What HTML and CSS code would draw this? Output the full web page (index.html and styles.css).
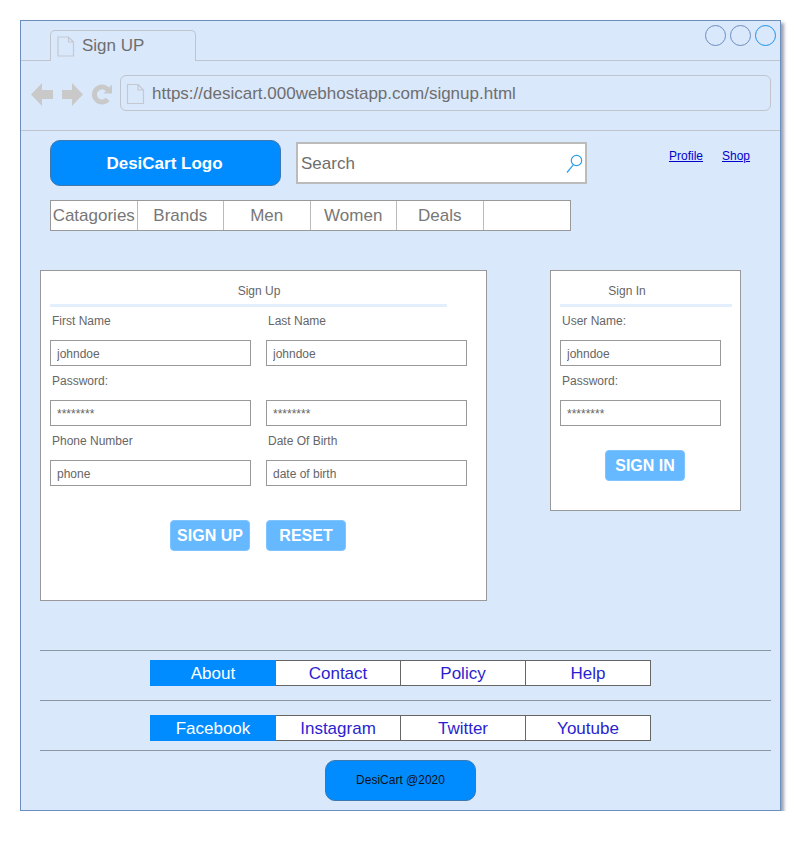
FILE: index.html
```html
<!DOCTYPE html>
<html lang="en">
<head>
  <meta charset="UTF-8" />
  <meta name="viewport" content="width=device-width, initial-scale=1.0"/>
  <title>Sign UP - DesiCart</title>
  <link rel="stylesheet" href="styles.css">
</head>
<body>
  <div class="window">
    <!-- browser chrome -->
    <div class="tab-strip">
      <div class="tab">
        <svg class="page-icon" width="18" height="21" viewBox="0 0 18 21">
          <path d="M1 1H11.500L16.500 6V20H1Z M11.500 1V6H16.500" fill="none" stroke="#c4c9d0" stroke-width="1.200"/>
        </svg>
        <span>Sign UP</span>
      </div>
      <div class="window-buttons">
        <span class="circle"></span>
        <span class="circle"></span>
        <span class="circle circle-active"></span>
      </div>
    </div>

    <div class="address-row">
      <svg class="toolbar-icons" width="84" height="24" viewBox="0 0 84 24">
        <path d="M0 11.500L11 0V7H22V16H11V23Z" fill="#c9c9c9"/>
        <path d="M52 11.500L41 0V7H31V16H41V23Z" fill="#c9c9c9"/>
        <path d="M77.500 7.800A7.500 7.500 0 1 0 76.700 16.300" fill="none" stroke="#c9c9c9" stroke-width="5"/>
        <path d="M72.500 10.500L81 1.500V10.500Z" fill="#c9c9c9"/>
      </svg>
      <div class="url-bar">
        <svg class="page-icon" width="19" height="22" viewBox="0 0 19 22">
          <path d="M1.500 1.500H12L17.500 7V20.500H1.500Z M12 1.500V7H17.500" fill="none" stroke="#c4c9d0" stroke-width="1.200"/>
        </svg>
        <span>https://desicart.000webhostapp.com/signup.html</span>
      </div>
    </div>

    <!-- site header -->
    <header class="site-header">
      <div class="logo">DesiCart Logo</div>
      <div class="search">
        <input class="search-input" type="text" placeholder="Search">
        <svg class="search-icon" width="17" height="19" viewBox="0 0 17 19">
          <circle cx="10.500" cy="6.500" r="5.200" fill="none" stroke="#2f9fe8" stroke-width="1.200"/>
          <path d="M7.300 10.800L1 18.500" fill="none" stroke="#2f9fe8" stroke-width="1.200"/>
        </svg>
      </div>
      <nav class="top-links">
        <a href="#">Profile</a>
        <a href="#">Shop</a>
      </nav>
    </header>

    <nav class="main-nav">
      <span>Catagories</span>
      <span>Brands</span>
      <span>Men</span>
      <span>Women</span>
      <span>Deals</span>
      <span></span>
    </nav>

    <main class="panels">
      <form class="panel panel-signup">
        <h2 class="panel-title">Sign Up</h2>
        <div class="field-grid">
          <div class="field">
            <label for="first-name">First Name</label>
            <input type="text" id="first-name" value="johndoe">
          </div>
          <div class="field">
            <label for="last-name">Last Name</label>
            <input type="text" id="last-name" value="johndoe">
          </div>
          <div class="field">
            <label for="password">Password:</label>
            <input type="text" id="password" value="********">
          </div>
          <div class="field">
            <label for="password-again">&nbsp;</label>
            <input type="text" id="password-again" value="********">
          </div>
          <div class="field">
            <label for="phone">Phone Number</label>
            <input type="text" id="phone" value="phone">
          </div>
          <div class="field">
            <label for="dob">Date Of Birth</label>
            <input type="text" id="dob" value="date of birth">
          </div>
        </div>
        <div class="button-row">
          <button type="submit">SIGN UP</button>
          <button type="reset">RESET</button>
        </div>
      </form>

      <form class="panel panel-signin">
        <h2 class="panel-title">Sign In</h2>
        <div class="field">
          <label for="user-name">User Name:</label>
          <input type="text" id="user-name" value="johndoe">
        </div>
        <div class="field">
          <label for="signin-password">Password:</label>
          <input type="text" id="signin-password" value="********">
        </div>
        <div class="button-row">
          <button type="submit">SIGN IN</button>
        </div>
      </form>
    </main>

    <footer class="site-footer">
      <hr>
      <nav class="footer-nav footer-nav-first">
        <a class="active" href="#">About</a>
        <a href="#">Contact</a>
        <a href="#">Policy</a>
        <a href="#">Help</a>
      </nav>
      <hr>
      <nav class="footer-nav footer-nav-social">
        <a class="active" href="#">Facebook</a>
        <a href="#">Instagram</a>
        <a href="#">Twitter</a>
        <a href="#">Youtube</a>
      </nav>
      <hr>
      <div class="copyright">DesiCart @2020</div>
    </footer>
  </div>
</body>
</html>
```

FILE: styles.css
```css
body {
  font-family: "Liberation Sans", Arial, sans-serif;
  margin: 0;
  padding: 20px 0 0 20px;
  background-color: #fff;
}
* {
  box-sizing: border-box;
}
.window {
  width: 761px;
  height: 791px;
  background-color: #dae8fc;
  border: 1px solid #6c8ebf;
  box-shadow: 3px 3px 3px rgba(60, 70, 100, 0.5);
}

/* browser chrome */
.tab-strip {
  display: flex;
  align-items: flex-end;
  height: 40px;
  padding: 0 4px 0 29px;
  border-bottom: 1px solid #c0c4cc;
}
.tab {
  display: flex;
  align-items: center;
  gap: 7px;
  width: 146px;
  height: 31px;
  margin-bottom: -1px;
  padding: 0 0 0 6px;
  background-color: #dae8fc;
  border: 1px solid #c0c4cc;
  border-bottom: none;
  border-radius: 5px 5px 0 0;
  color: #6e6e6e;
  font-size: 17px;
}
.window-buttons {
  display: flex;
  gap: 4px;
  margin-left: auto;
  align-self: flex-start;
  margin-top: 4px;
}
.circle {
  width: 21px;
  height: 21px;
  border: 1px solid #6c8ebf;
  border-radius: 50%;
}
.circle-active {
  border-color: #1e90e8;
}
.address-row {
  display: flex;
  align-items: flex-start;
  height: 70px;
  padding: 14px 9px 0 10px;
  border-bottom: 1px solid #c0c4cc;
}
.toolbar-icons {
  flex: none;
  margin: 8px 5px 0 0;
}
.url-bar {
  display: flex;
  align-items: center;
  gap: 7px;
  flex: 1;
  height: 36px;
  padding: 2px 0 0 5px;
  border: 1px solid #c0c4cc;
  border-radius: 6px;
  color: #6e6e6e;
  font-size: 17px;
}
.page-icon {
  flex: none;
}

/* site header */
.site-header {
  display: flex;
  align-items: flex-start;
  padding: 9px 0 0 29px;
}
.logo {
  width: 231px;
  height: 46px;
  padding-right: 2px;
  line-height: 45px;
  text-align: center;
  background-color: #008cff;
  border: 1px solid #3d78b0;
  border-radius: 10px;
  color: #fff;
  font-size: 17px;
  font-weight: bold;
}
.search {
  display: flex;
  align-items: center;
  width: 291px;
  height: 42px;
  margin: 2px 0 0 15px;
  padding: 2px 2px 0 3px;
  background-color: #fff;
  border: 2px solid #bbb;
}
.search-input {
  flex: 1;
  min-width: 0;
  padding: 0;
  border: none;
  outline: none;
  font-family: inherit;
  font-size: 17px;
}
.search-input::placeholder {
  color: #6e6e6e;
  opacity: 1;
}
.search-icon {
  margin-top: -2px;
}
.top-links {
  display: flex;
  gap: 19px;
  margin: 9px 0 0 82px;
  font-size: 12px;
}
.top-links a {
  color: #0000cc;
}
.main-nav {
  display: grid;
  grid-template-columns: repeat(6, 1fr);
  width: 521px;
  height: 31px;
  margin: 14px 0 0 29px;
  background-color: #fff;
  border: 1px solid #999;
}
.main-nav span {
  line-height: 29px;
  text-align: center;
  color: #777;
  font-size: 17px;
  white-space: nowrap;
  border-right: 1px solid #bbb;
}
.main-nav span:last-child {
  border-right: none;
}

/* forms */
.panels {
  display: flex;
  align-items: flex-start;
  gap: 63px;
  margin: 39px 0 0 19px;
}
.panel {
  padding: 0 9px;
  background-color: #fff;
  border: 1px solid #999;
}
.panel-signup {
  width: 447px;
  height: 331px;
}
.panel-signin {
  width: 191px;
  height: 241px;
}
.panel-title {
  height: 36px;
  margin: 0 0 -1px;
  line-height: 40px;
  text-align: center;
  color: #666;
  font-size: 12px;
  font-weight: normal;
  border-bottom: 3px solid #e4effd;
}
.panel-signup .panel-title {
  width: 397px;
  padding-left: 21px;
}
.panel-signin .panel-title {
  width: 172px;
  padding-right: 38px;
}
.field-grid {
  display: grid;
  grid-template-columns: 201px 201px;
  column-gap: 15px;
}
.field label {
  display: block;
  height: 34px;
  padding-left: 2px;
  line-height: 30px;
  color: #666;
  font-size: 12px;
}
.field input {
  display: block;
  width: 100%;
  height: 26px;
  padding: 2px 6px 0;
  background-color: #fff;
  border: 1px solid #999;
  color: #666;
  font-family: inherit;
  font-size: 12px;
}
.panel-signin .field input {
  width: 161px;
}
.button-row {
  display: flex;
  justify-content: center;
  gap: 16px;
  margin-top: 34px;
}
.panel-signup .button-row {
  width: 416px;
}
.panel-signin .button-row {
  margin-top: 24px;
  justify-content: flex-start;
  padding-left: 45px;
}
.button-row button {
  width: 80px;
  height: 31px;
  padding: 0;
  background-color: #66b8ff;
  border: 1px solid #80c4ff;
  border-radius: 4px;
  color: #fff;
  font-family: inherit;
  font-size: 16px;
  font-weight: bold;
}

/* footer */
.site-footer {
  margin-top: 49px;
}
.site-footer hr {
  height: 1px;
  margin: 0 9px 0 19px;
  background-color: #8c96a3;
  border: none;
}
.footer-nav {
  display: grid;
  grid-template-columns: 126px 125px 125px 125px;
  grid-template-rows: 24px;
  width: 501px;
  height: 26px;
  margin-left: 129px;
  background-color: #fff;
  border-top: 1px solid #666;
  border-bottom: 1px solid #666;
}
.footer-nav-first {
  margin-top: 9px;
  margin-bottom: 14px;
}
.footer-nav-social {
  margin-top: 14px;
  margin-bottom: 9px;
}
.footer-nav a {
  height: 24px;
  line-height: 26px;
  text-align: center;
  color: #2a1fd0;
  font-size: 17px;
  text-decoration: none;
  border-right: 1px solid #666;
}
.footer-nav a.active {
  height: 26px;
  margin: -1px 0;
  line-height: 28px;
  background-color: #008cff;
  color: #fff;
  border-right: none;
}
.copyright {
  width: 151px;
  height: 41px;
  margin: 9px 0 0 304px;
  line-height: 39px;
  text-align: center;
  background-color: #008cff;
  border: 1px solid #3d78b0;
  border-radius: 10px;
  color: #111;
  font-size: 12px;
}
```
